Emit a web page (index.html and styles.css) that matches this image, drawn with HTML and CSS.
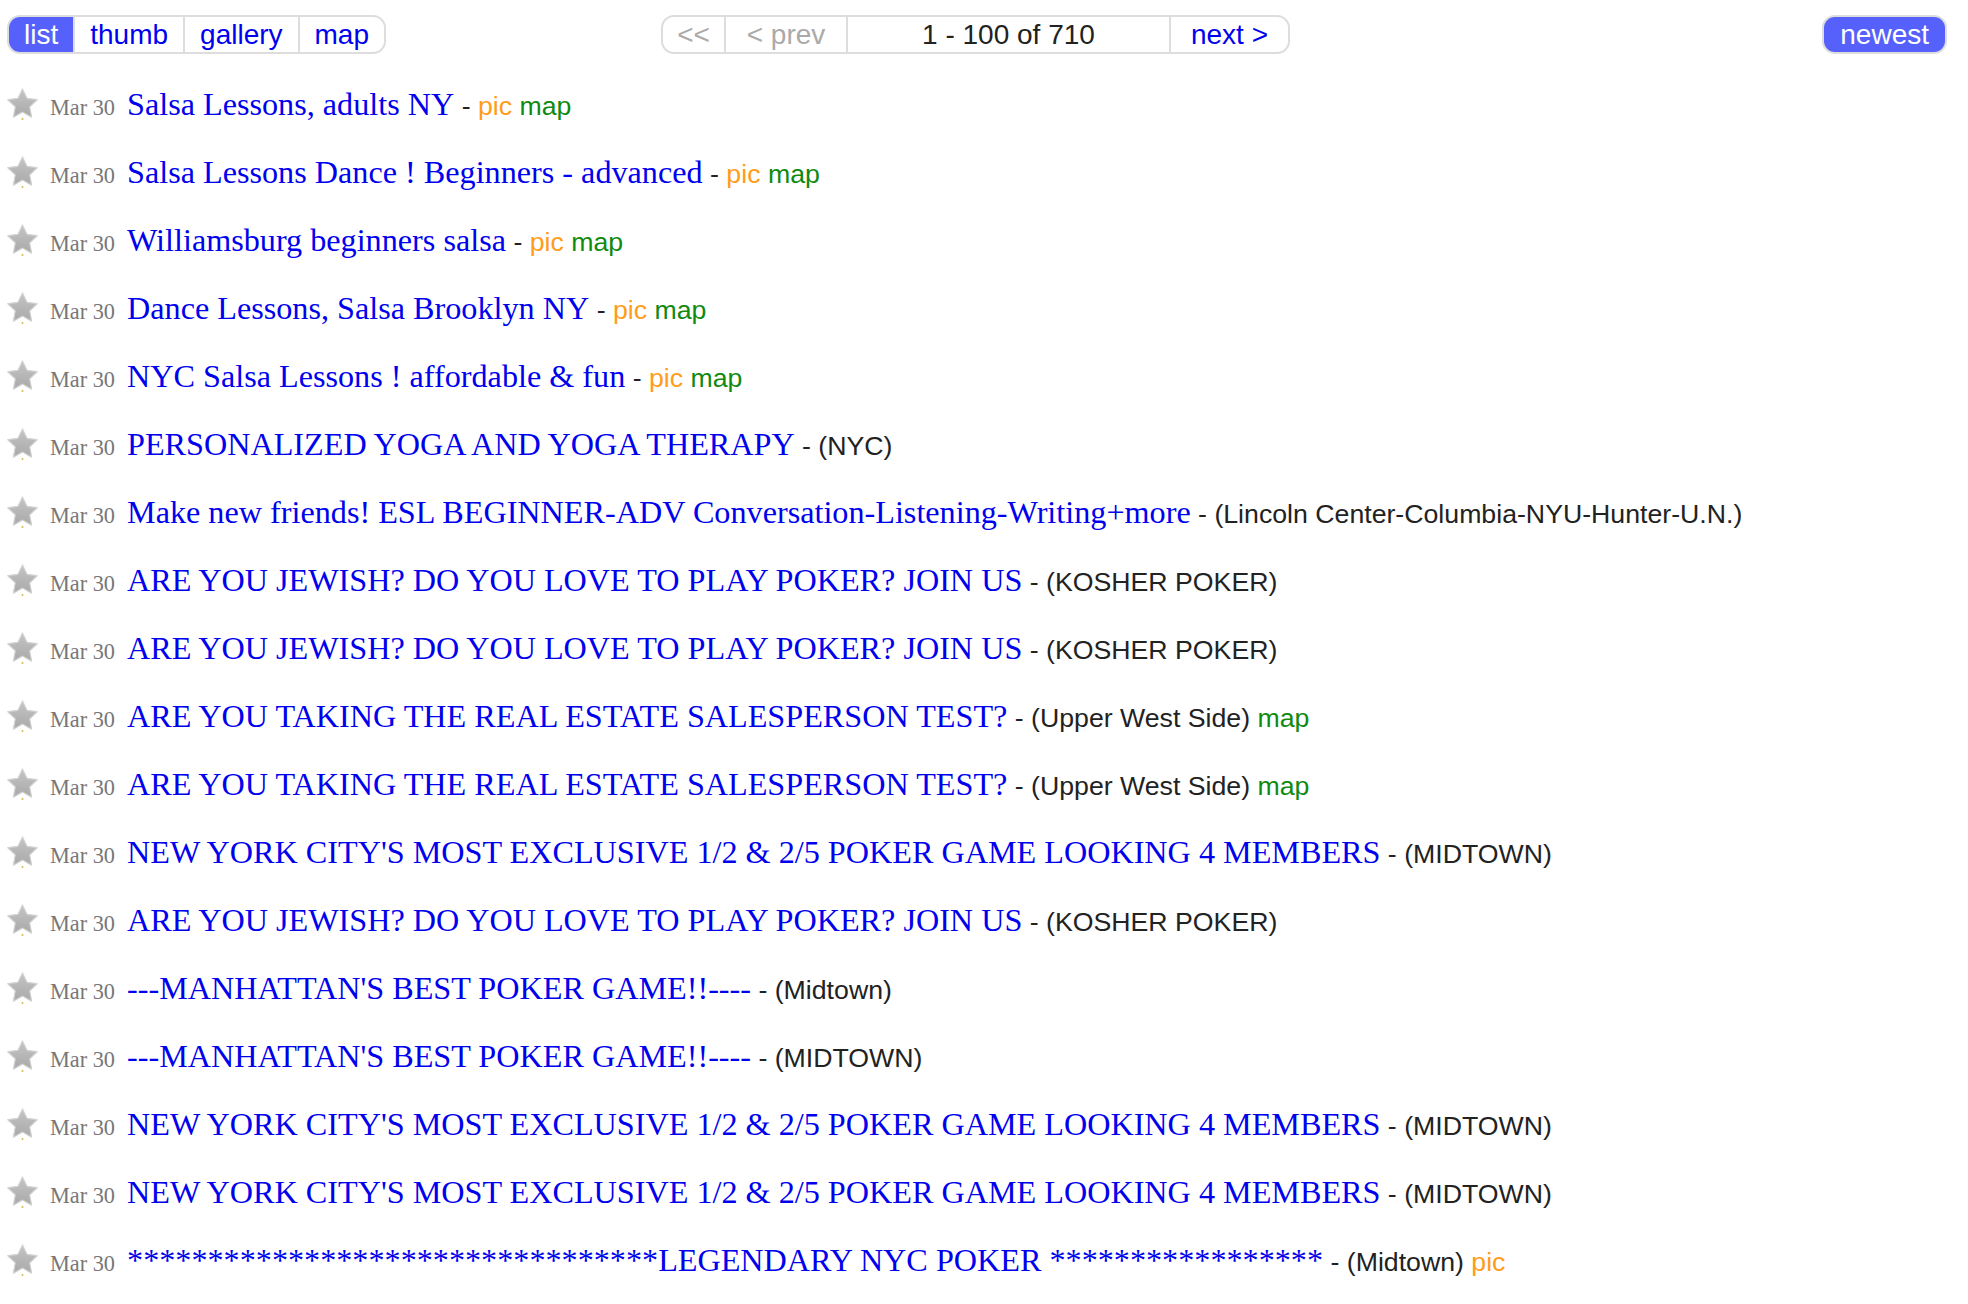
FILE: index.html
```html
<!DOCTYPE html>
<html>
<head>
<meta charset="utf-8">
<title>classes</title>
<link rel="stylesheet" href="styles.css">
</head>
<body>
<svg class="defs" width="0" height="0" aria-hidden="true">
  <defs>
    <linearGradient id="starfill" x1="0" y1="0" x2="0" y2="1">
      <stop offset="0" stop-color="#c4c4c4"/>
      <stop offset="1" stop-color="#a9a9a9"/>
    </linearGradient>
    <symbol id="star" viewBox="0 0 31 32">
      <polygon points="15.5,1 19.97,10.35 30.2,11.7 22.73,18.85 24.6,29.2 15.5,24.1 6.4,29.2 8.27,18.85 0.8,11.7 11.03,10.35" fill="url(#starfill)" stroke="#d2d2d2" stroke-width="1.2" stroke-linejoin="round"/>
      <circle cx="15.5" cy="31" r="1" fill="#e2b54a"/>
    </symbol>
  </defs>
</svg>

<div class="header">
  <div class="views">
    <a class="sel" href="#">list</a><a href="#">thumb</a><a href="#">gallery</a><a href="#">map</a>
  </div>
  <div class="pager">
    <span class="seg first dis">&lt;&lt;</span><span class="seg prev dis">&lt; prev</span><span class="seg count">1 - 100 of 710</span><a class="seg next" href="#">next &gt;</a>
  </div>
  <a class="newest" href="#">newest</a>
</div>

<div class="results">
  <div class="row"><svg class="star"><use href="#star"/></svg><span class="date">Mar 30</span><a class="title" href="#">Salsa Lessons, adults NY</a><span class="meta"> - <span class="pic">pic</span> <span class="maptag">map</span></span></div>
  <div class="row"><svg class="star"><use href="#star"/></svg><span class="date">Mar 30</span><a class="title" href="#">Salsa Lessons Dance ! Beginners - advanced</a><span class="meta"> - <span class="pic">pic</span> <span class="maptag">map</span></span></div>
  <div class="row"><svg class="star"><use href="#star"/></svg><span class="date">Mar 30</span><a class="title" href="#">Williamsburg beginners salsa</a><span class="meta"> - <span class="pic">pic</span> <span class="maptag">map</span></span></div>
  <div class="row"><svg class="star"><use href="#star"/></svg><span class="date">Mar 30</span><a class="title" href="#">Dance Lessons, Salsa Brooklyn NY</a><span class="meta"> - <span class="pic">pic</span> <span class="maptag">map</span></span></div>
  <div class="row"><svg class="star"><use href="#star"/></svg><span class="date">Mar 30</span><a class="title" href="#">NYC Salsa Lessons ! affordable &amp; fun</a><span class="meta"> - <span class="pic">pic</span> <span class="maptag">map</span></span></div>
  <div class="row"><svg class="star"><use href="#star"/></svg><span class="date">Mar 30</span><a class="title" href="#">PERSONALIZED YOGA AND YOGA THERAPY</a><span class="meta"> - (NYC)</span></div>
  <div class="row"><svg class="star"><use href="#star"/></svg><span class="date">Mar 30</span><a class="title" href="#">Make new friends! ESL BEGINNER-ADV Conversation-Listening-Writing+more</a><span class="meta"> - (Lincoln Center-Columbia-NYU-Hunter-U.N.)</span></div>
  <div class="row"><svg class="star"><use href="#star"/></svg><span class="date">Mar 30</span><a class="title" href="#">ARE YOU JEWISH? DO YOU LOVE TO PLAY POKER? JOIN US</a><span class="meta"> - (KOSHER POKER)</span></div>
  <div class="row"><svg class="star"><use href="#star"/></svg><span class="date">Mar 30</span><a class="title" href="#">ARE YOU JEWISH? DO YOU LOVE TO PLAY POKER? JOIN US</a><span class="meta"> - (KOSHER POKER)</span></div>
  <div class="row"><svg class="star"><use href="#star"/></svg><span class="date">Mar 30</span><a class="title" href="#">ARE YOU TAKING THE REAL ESTATE SALESPERSON TEST?</a><span class="meta"> - (Upper West Side) <span class="maptag">map</span></span></div>
  <div class="row"><svg class="star"><use href="#star"/></svg><span class="date">Mar 30</span><a class="title" href="#">ARE YOU TAKING THE REAL ESTATE SALESPERSON TEST?</a><span class="meta"> - (Upper West Side) <span class="maptag">map</span></span></div>
  <div class="row"><svg class="star"><use href="#star"/></svg><span class="date">Mar 30</span><a class="title" href="#">NEW YORK CITY'S MOST EXCLUSIVE 1/2 &amp; 2/5 POKER GAME LOOKING 4 MEMBERS</a><span class="meta"> - (MIDTOWN)</span></div>
  <div class="row"><svg class="star"><use href="#star"/></svg><span class="date">Mar 30</span><a class="title" href="#">ARE YOU JEWISH? DO YOU LOVE TO PLAY POKER? JOIN US</a><span class="meta"> - (KOSHER POKER)</span></div>
  <div class="row"><svg class="star"><use href="#star"/></svg><span class="date">Mar 30</span><a class="title" href="#">---MANHATTAN'S BEST POKER GAME!!----</a><span class="meta"> - (Midtown)</span></div>
  <div class="row"><svg class="star"><use href="#star"/></svg><span class="date">Mar 30</span><a class="title" href="#">---MANHATTAN'S BEST POKER GAME!!----</a><span class="meta"> - (MIDTOWN)</span></div>
  <div class="row"><svg class="star"><use href="#star"/></svg><span class="date">Mar 30</span><a class="title" href="#">NEW YORK CITY'S MOST EXCLUSIVE 1/2 &amp; 2/5 POKER GAME LOOKING 4 MEMBERS</a><span class="meta"> - (MIDTOWN)</span></div>
  <div class="row"><svg class="star"><use href="#star"/></svg><span class="date">Mar 30</span><a class="title" href="#">NEW YORK CITY'S MOST EXCLUSIVE 1/2 &amp; 2/5 POKER GAME LOOKING 4 MEMBERS</a><span class="meta"> - (MIDTOWN)</span></div>
  <div class="row"><svg class="star"><use href="#star"/></svg><span class="date">Mar 30</span><a class="title" href="#">*********************************LEGENDARY NYC POKER *****************</a><span class="meta"> - (Midtown) <span class="pic">pic</span></span></div>
</div>
</body>
</html>
```

FILE: styles.css
```css
html, body {
  margin: 0;
  padding: 0;
  background: #ffffff;
}

body {
  font-family: "Liberation Sans", Arial, sans-serif;
  color: #222222;
}

.defs {
  position: absolute;
  width: 0;
  height: 0;
  overflow: hidden;
}

/* ---------- header bar ---------- */
.header {
  display: grid;
  grid-template-columns: 654px auto 1fr;
  align-items: start;
  padding: 15px 21px 0 7px;
  font-size: 28px;
}

.views {
  display: flex;
  justify-self: start;
  border: 2px solid #dddddd;
  border-radius: 13px;
  overflow: hidden;
}

.views a {
  display: block;
  padding: 2px 15px 1px;
  line-height: 32px;
  color: #0000ee;
  text-decoration: none;
}

.views a + a {
  border-left: 2px solid #dddddd;
}

.views a.sel {
  background: #5561fa;
  color: #ffffff;
}

.pager {
  display: flex;
  border: 2px solid #dddddd;
  border-radius: 13px;
  overflow: hidden;
}

.pager .seg {
  display: block;
  box-sizing: border-box;
  text-align: center;
  padding: 2px 0 1px;
  line-height: 32px;
  border-left: 2px solid #dddddd;
  text-decoration: none;
  white-space: nowrap;
}

.pager .first {
  width: 61px;
  border-left: 0;
}

.pager .prev {
  width: 122px;
}

.pager .count {
  width: 323px;
  color: #222222;
}

.pager .next {
  width: 119px;
  color: #0000ee;
}

.pager .dis {
  color: #aaaaaa;
}

.newest {
  justify-self: end;
  display: block;
  background: #5561fa;
  color: #ffffff;
  border: 2px solid #dddddd;
  border-radius: 13px;
  padding: 2px 16px 1px;
  line-height: 32px;
  text-decoration: none;
}

/* ---------- result rows ---------- */
.results {
  margin-top: 14px;
}

.row {
  box-sizing: border-box;
  height: 68px;
  padding: 18px 0 0 7px;
  font-family: "Liberation Serif", "Times New Roman", serif;
  font-size: 32.2px;
  line-height: normal;
  white-space: nowrap;
}

.star {
  width: 31px;
  height: 32px;
  vertical-align: -5px;
}

.date {
  margin-left: 12px;
  font-size: 22.3px;
  color: #777777;
}

.title {
  margin-left: 12px;
  color: #0000ee;
  text-decoration: none;
}

.meta {
  font-family: "Liberation Sans", Arial, sans-serif;
  font-size: 26.7px;
  color: #222222;
}

.pic {
  color: #ff9c1a;
}

.maptag {
  color: #108a10;
}
```
